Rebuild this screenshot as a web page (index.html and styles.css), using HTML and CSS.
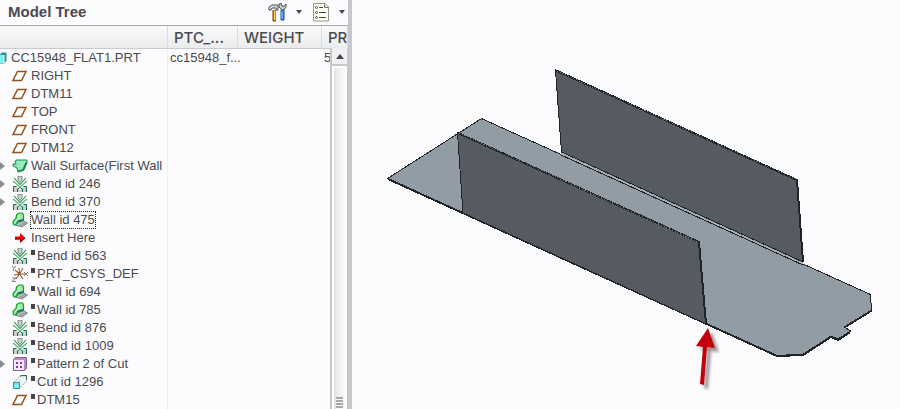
FILE: index.html
```html
<!DOCTYPE html>
<html lang="en">
<head>
<meta charset="utf-8">
<title>Model Tree</title>
<link rel="stylesheet" href="styles.css">
</head>
<body>
<svg class="sprite" aria-hidden="true">
  <symbol id="plane" viewBox="0 0 16 16"><path d="M5.500 3.500H14L9.500 12.500H1z" fill="#fff" stroke="#96521f" stroke-width="1.500"/></symbol>
  <symbol id="surface" viewBox="0 0 16 16"><path d="M4 2H15V5L12 12L6 14L5 10L1 8V6H4L3 3.500z" fill="#8fe6b4" stroke="#149048"/><path d="M14.500 4L11 12L6 13.500" fill="none" stroke="#0b8040" stroke-width="1.500"/><path d="M6 4h1M9 4h1M12 4h1M7.500 6h1M10.500 6h1M6 8h1M9 8h1" stroke="#e2fff0"/></symbol>
  <symbol id="bend" viewBox="0 0 16 16"><path d="M1 10.500H5L8 14L11 10.500H15V16H1z" fill="#c8ccca"/><path d="M6 0V4L8 6.500L10 4V0z" fill="#ccd2cf" stroke="#5b756c" stroke-width=".8"/><path d="M1.500 16V10.500H4.500M11.500 10.500H14.500V16M5.500 16V13L8 11.500L10.500 13V16" fill="none" stroke="#14704c"/><path d="M1 5L8 11L15 5" fill="none" stroke="#52bd70" stroke-width="1.300"/><path d="M2 2L8 8.500L14 2" fill="none" stroke="#2a7d50" stroke-width="1.100"/></symbol>
  <symbol id="wall" viewBox="0 0 16 16"><path d="M3 13L10 15L15.500 11L11 8.500z" fill="#c0c2c4" stroke="#85878a"/><path d="M6 14L13 10.500M8.500 14.500L14.500 11" stroke="#85878a" stroke-width=".8"/><path d="M4.500 3L7 1H10.500L11.500 3V8.500L5 10.500L4 13L1.500 12.500L1 9.500L4 6.500z" fill="#9aeb9e" stroke="#0ba22a" stroke-width="1.200"/><path d="M7 2.500V6.500L3 9.500" stroke="#d8ffd9" fill="none"/><path d="M5 9.500L11 7.500" stroke="#1438a0" fill="none" stroke-width="1.200"/></symbol>
  <symbol id="insert" viewBox="0 0 16 16"><path d="M3 6.500H8V3L13.500 8L8 13V9.500H3z" fill="#f00000"/><path d="M3 9H8.500V12L13 8" fill="none" stroke="#a00000"/></symbol>
  <symbol id="csys" viewBox="0 0 16 16"><path d="M7.500 8L3 4M7.500 8L11 2M7.500 8H13M7.500 8L2 9M7.500 8L4 13M7.500 8L11 13M7.500 8L7 2" stroke="#9b5827" stroke-width="1.100"/><path d="M0 0L2 2.500L4 0M2 2.500L1 5M12 6L16 10M16 6L12 10M0 12H4L0 15.500H4" fill="none" stroke="#7c7e80"/></symbol>
  <symbol id="pattern" viewBox="0 0 16 16"><path d="M1.500 3.500L3.500 1.500H14.500V12.500L12.500 14.500H1.500z" fill="#b88ac8" stroke="#85619a"/><path d="M2 4H12V14H2z" fill="#f6e3ff"/><path d="M4 7h2M8 7h2M4 11h2M8 11h2" stroke="#72448c" stroke-width="2"/></symbol>
  <symbol id="cut" viewBox="0 0 16 16"><path d="M1.500 8L8 2H14.500V7L8 14" fill="#edf5f5" stroke="#9ab0b0" stroke-dasharray="2 1"/><path d="M8 2L10 1.500H14.500V6" fill="none" stroke="#47575a"/><path d="M1.500 8.500H7.500V14.500H1.500z" fill="#7cecf0" stroke="#3c8a99"/></symbol>
</svg>

<div class="app">
  <aside class="panel">
    <header class="titlebar">
      <h1>Model Tree</h1>
      <div class="tools">
        <button class="tool" type="button" aria-label="Settings">
          <svg width="20" height="20" viewBox="0 0 20 20"><path d="M6 8H9V19H6z" fill="#e87516"/><path d="M6 8V19H9" fill="none" stroke="#863b17"/><path d="M7.500 9V18" stroke="#ffe04c"/><path d="M2 8V5L5 3H11V8H9V6H5L4 8z" fill="#d6dbdf" stroke="#4b5558"/><path d="M14 8H17V18H14z" fill="#3380e6" stroke="#124a9d"/><path d="M15 9V17" stroke="#91d5ff"/><path d="M12 2V5L15 8H17L19 5V2L17 4H15L14 1z" fill="#bfc8ca" stroke="#4d5c60"/></svg>
          <span class="caret"></span>
        </button>
        <button class="tool" type="button" aria-label="Show">
          <svg width="18" height="20" viewBox="0 0 18 20"><path d="M1.500 1.500H13L16.500 5V19H1.500z" fill="#fffff5" stroke="#969587"/><path d="M12.500 1.500V5.500H16.500" fill="#dedccd" stroke="#77766c"/><path d="M7 5.500H11M7 10.500H14M7 15.500H14" stroke="#48483f"/><g fill="#fff" stroke="#48483f"><circle cx="4.500" cy="5.500" r="1"/><circle cx="4.500" cy="10.500" r="1"/><circle cx="4.500" cy="15.500" r="1"/></g></svg>
          <span class="caret"></span>
        </button>
      </div>
    </header>
    <div class="tree">
      <table>
        <colgroup><col class="c-name"><col class="c-ptc"><col class="c-weight"><col></colgroup>
        <thead><tr><th aria-label="Name"></th><th>PTC_...</th><th>WEIGHT</th><th>PR</th></tr></thead>
        <tbody>
          <tr><td><div class="node root"><svg class="part" viewBox="0 0 7 12"><path d="M0 2.500L2 .5H6.500V9L4 11.500H0z" fill="#26939a"/><path d="M0 3H4V11H0z" fill="#7ef1ef"/><path d="M4 3V11" stroke="#fff"/></svg><span>CC15948_FLAT1.PRT</span></div></td><td>cc15948_f...</td><td></td><td>5</td></tr>
          <tr><td><div class="node"><svg><use href="#plane"/></svg><span>RIGHT</span></div></td><td></td><td></td><td></td></tr>
          <tr><td><div class="node"><svg><use href="#plane"/></svg><span>DTM11</span></div></td><td></td><td></td><td></td></tr>
          <tr><td><div class="node"><svg><use href="#plane"/></svg><span>TOP</span></div></td><td></td><td></td><td></td></tr>
          <tr><td><div class="node"><svg><use href="#plane"/></svg><span>FRONT</span></div></td><td></td><td></td><td></td></tr>
          <tr><td><div class="node"><svg><use href="#plane"/></svg><span>DTM12</span></div></td><td></td><td></td><td></td></tr>
          <tr><td><div class="node parent"><svg><use href="#surface"/></svg><span>Wall Surface(First Wall</span></div></td><td></td><td></td><td></td></tr>
          <tr><td><div class="node parent"><svg><use href="#bend"/></svg><span>Bend id 246</span></div></td><td></td><td></td><td></td></tr>
          <tr><td><div class="node parent"><svg><use href="#bend"/></svg><span>Bend id 370</span></div></td><td></td><td></td><td></td></tr>
          <tr><td><div class="node"><svg><use href="#wall"/></svg><span class="focused">Wall id 475</span></div></td><td></td><td></td><td></td></tr>
          <tr><td><div class="node"><svg><use href="#insert"/></svg><span>Insert Here</span></div></td><td></td><td></td><td></td></tr>
          <tr><td><div class="node"><svg><use href="#bend"/></svg><span class="suppressed">Bend id 563</span></div></td><td></td><td></td><td></td></tr>
          <tr><td><div class="node"><svg><use href="#csys"/></svg><span class="suppressed">PRT_CSYS_DEF</span></div></td><td></td><td></td><td></td></tr>
          <tr><td><div class="node"><svg><use href="#wall"/></svg><span class="suppressed">Wall id 694</span></div></td><td></td><td></td><td></td></tr>
          <tr><td><div class="node"><svg><use href="#wall"/></svg><span class="suppressed">Wall id 785</span></div></td><td></td><td></td><td></td></tr>
          <tr><td><div class="node"><svg><use href="#bend"/></svg><span class="suppressed">Bend id 876</span></div></td><td></td><td></td><td></td></tr>
          <tr><td><div class="node"><svg><use href="#bend"/></svg><span class="suppressed">Bend id 1009</span></div></td><td></td><td></td><td></td></tr>
          <tr><td><div class="node parent"><svg><use href="#pattern"/></svg><span class="suppressed">Pattern 2 of Cut</span></div></td><td></td><td></td><td></td></tr>
          <tr><td><div class="node"><svg><use href="#cut"/></svg><span class="suppressed">Cut id 1296</span></div></td><td></td><td></td><td></td></tr>
          <tr><td><div class="node"><svg><use href="#plane"/></svg><span class="suppressed">DTM15</span></div></td><td></td><td></td><td></td></tr>
        </tbody>
      </table>
      <div class="scrollbar">
        <button class="scroll-up" type="button" aria-label="Scroll up"></button>
        <div class="thumb"><span class="grip"></span></div>
      </div>
    </div>
  </aside>

  <main class="viewport">
    <svg class="model" viewBox="352 0 548 409" preserveAspectRatio="xMinYMin meet" role="img" aria-label="Sheet metal part">
      <defs><filter id="shadow" x="-50%" y="-20%" width="250%" height="150%"><feDropShadow dx="4" dy="4" stdDeviation="1.500" flood-color="#000" flood-opacity=".4"/></filter></defs>
      <g shape-rendering="crispEdges" stroke="#202327" stroke-linejoin="round">
        <path d="M387.500 178.500L481.500 118.500L870.500 294.500L871.500 311L844.500 327L850.500 331L838 339L831 336L803.500 354L777 355.500L706 324z" fill="#929ca4"/>
        <path d="M388 179L777 356L803 355L831 337L838 340L850 332M845 327L871 311" fill="none" stroke-width="2"/>
        <path d="M561 152L803 262V265L561 155z" fill="#a4afb8" stroke="none"/>
        <path d="M555.500 70.500L797 180L803 262L561.500 152z" fill="#565b61"/>
        <path d="M555 70L797 180L803 262" fill="none" stroke-width="2"/>
        <path d="M557 71L796 179" fill="none" stroke="#73797f" stroke-dasharray="1 2"/>
        <path d="M561 155L803 265" fill="none"/>
        <path d="M457.500 133L699 242L706 324L463 213z" fill="#565b61"/>
        <path d="M458 133L699 242L706 324" fill="none" stroke-width="2"/>
        <path d="M459 133L698 242" fill="none" stroke="#73797f" stroke-dasharray="1 2"/>
      </g>
      <path d="M708 328L715 348L707 347L704 385L700 384L703 347L696 346z" fill="#c40309" filter="url(#shadow)"/>
    </svg>
  </main>
</div>
</body>
</html>
```
FILE: styles.css
```css
*,
*::before {
  box-sizing: border-box;
}

body {
  margin: 0;
  background: #fcfcfe;
  color: #4a4a50;
  font: 13px/18px "Liberation Sans", Arial, sans-serif;
}

.sprite {
  position: absolute;
  width: 0;
  height: 0;
}

.app {
  display: flex;
  height: 100vh;
  overflow: hidden;
}

.panel {
  display: flex;
  flex: 0 0 352px;
  flex-direction: column;
  border-right: 4px solid #c6c8cb;
}

.titlebar {
  display: flex;
  align-items: center;
  justify-content: space-between;
  height: 26px;
  padding: 0 3px 2px 8px;
  border-bottom: 1px solid #a8aaac;
}

h1 {
  margin: 0;
  font: bold 15px/20px "Liberation Sans", Arial, sans-serif;
}

.tools {
  display: flex;
  gap: 10px;
}

.tool {
  display: flex;
  align-items: center;
  gap: 9px;
  padding: 0;
  border: 0;
  background: none;
}

.caret {
  border: 3px solid transparent;
  border-top: 4px solid #45454b;
  border-bottom: 0;
}

.tree {
  position: relative;
  flex: 1;
  min-height: 0;
  overflow: hidden;
}

table {
  width: 100%;
  table-layout: fixed;
  border-collapse: separate;
  border-spacing: 0;
}

.c-name {
  width: 168px;
}

.c-ptc {
  width: 70px;
}

.c-weight {
  width: 84px;
}

th {
  height: 23px;
  padding: 2px 0 0 6px;
  overflow: hidden;
  border-right: 1px solid #dcdde0;
  border-bottom: 1px solid #c9cbce;
  background: linear-gradient(#fafafb, #ebecee);
  font: 500 15px/18px Inter, "Liberation Sans", sans-serif;
  text-align: left;
  white-space: nowrap;
}

td {
  height: 18px;
  padding: 0 0 0 2px;
  white-space: nowrap;
}

td:first-child {
  padding: 0;
  overflow: hidden;
  border-right: 1px solid #f0f0f3;
}

.node {
  display: flex;
  align-items: center;
  gap: 3px;
  height: 18px;
  padding-left: 12px;
}

.node svg {
  flex: none;
  width: 16px;
  height: 16px;
}

.node.root {
  gap: 4px;
  padding-left: 0;
}

.node .part {
  width: 7px;
  height: 12px;
}

.node.parent {
  padding-left: 0;
}

.parent::before {
  flex: none;
  width: 9px;
  border: 4px solid transparent;
  border-right: 0;
  border-left: 5px solid #8c8c90;
  content: "";
}

.focused {
  outline: 1px dotted #222;
  line-height: 16px;
}

.suppressed::before {
  display: inline-block;
  width: 4px;
  height: 5px;
  margin-right: 2px;
  background: #45454b;
  vertical-align: 5px;
  content: "";
}

.scrollbar {
  position: absolute;
  top: 22px;
  right: 0;
  bottom: 0;
  display: flex;
  flex-direction: column;
  width: 18px;
  padding: 0 1px 0 2px;
  background: #c6c8cb;
}

.scroll-up {
  display: grid;
  place-items: center;
  height: 16px;
  padding: 0;
  border: 0;
  background: #f0f1f3;
}

.scroll-up::before {
  border: 4px solid transparent;
  border-top: 0;
  border-bottom: 5px solid #45454b;
  content: "";
}

.thumb {
  display: flex;
  flex: 1;
  align-items: flex-end;
  justify-content: center;
  margin-top: 2px;
  border: 2px solid #fff;
  border-bottom: 0;
  background: linear-gradient(90deg, #e4e5e6, #fbfbfc);
}

.grip {
  width: 7px;
  height: 12px;
  background: repeating-linear-gradient(#aaa 0 2px, #f8f8f8 2px 3px);
}

.viewport {
  flex: 1;
  min-width: 0;
}

.model {
  display: block;
  width: 100%;
  height: 100%;
}
```
